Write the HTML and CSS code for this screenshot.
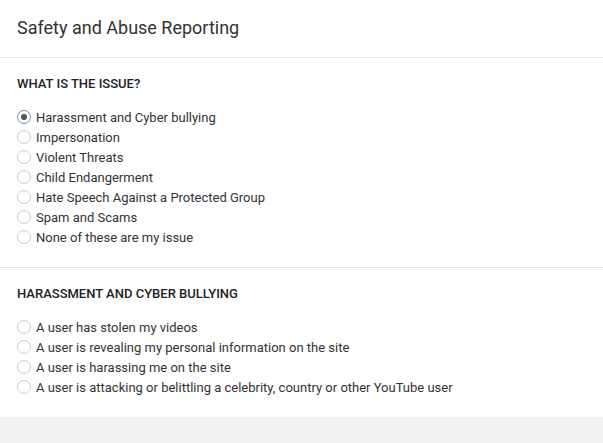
FILE: index.html
```html
<!DOCTYPE html>
<html lang="en">
<head>
    <meta charset="UTF-8">
    <meta name="viewport" content="width=device-width, initial-scale=1.0">
    <title>Safety and Abuse Reporting</title>
    <link rel="stylesheet" href="styles.css">
</head>
<body>
    <div class="card">
        <div class="header">
            <h1>Safety and Abuse Reporting</h1>
        </div>

        <div class="section">
            <h2>What is the issue?</h2>
            <div class="options">
                <label><input type="radio" name="issue" checked> Harassment and Cyber bullying</label>
                <label><input type="radio" name="issue"> Impersonation</label>
                <label><input type="radio" name="issue"> Violent Threats</label>
                <label><input type="radio" name="issue"> Child Endangerment</label>
                <label><input type="radio" name="issue"> Hate Speech Against a Protected Group</label>
                <label><input type="radio" name="issue"> Spam and Scams</label>
                <label><input type="radio" name="issue"> None of these are my issue</label>
            </div>
        </div>

        <div class="section">
            <h2>Harassment and Cyber bullying</h2>
            <div class="options">
                <label><input type="radio" name="detail"> A user has stolen my videos</label>
                <label><input type="radio" name="detail"> A user is revealing my personal information on the site</label>
                <label><input type="radio" name="detail"> A user is harassing me on the site</label>
                <label><input type="radio" name="detail"> A user is attacking or belittling a celebrity, country or other YouTube user</label>
            </div>
        </div>
    </div>
</body>
</html>
```

FILE: styles.css
```css
body {
    font-family: Roboto, "Noto Sans", Arial, sans-serif;
    background-color: #f1f1f1;
    margin: 0;
    color: #222;
}

.card {
    background-color: #fff;
    box-shadow: 0 1px 2px rgba(0, 0, 0, 0.1);
}

.header {
    padding: 15px 17px 16px;
    border-bottom: 1px solid #e2e2e2;
}

.header h1 {
    margin: 0;
    font-size: 18px;
    font-weight: 400;
    line-height: 26px;
    color: #333;
}

.section {
    padding: 18px 17px 20px;
    border-bottom: 1px solid #e2e2e2;
}

.section:last-child {
    border-bottom: none;
}

.section h2 {
    margin: 0 0 15px;
    font-size: 13px;
    font-weight: 500;
    line-height: 16px;
    text-transform: uppercase;
    color: #222;
}

.options label {
    display: flex;
    align-items: center;
    height: 20px;
    font-size: 13px;
    color: #333;
}

/* custom radio to look like the old YouTube one */
.options input[type="radio"] {
    appearance: none;
    -webkit-appearance: none;
    width: 14px;
    height: 14px;
    margin: 0 5px 0 0;
    border: 1px solid #c8c8c8;
    border-radius: 50%;
    background-color: #fff;
    display: flex;
    align-items: center;
    justify-content: center;
    box-sizing: border-box;
}

.options input[type="radio"]:checked {
    border-color: #6f93c0;
}

.options input[type="radio"]:checked::after {
    content: "";
    width: 6px;
    height: 6px;
    border-radius: 50%;
    background-color: #555;
}
```
